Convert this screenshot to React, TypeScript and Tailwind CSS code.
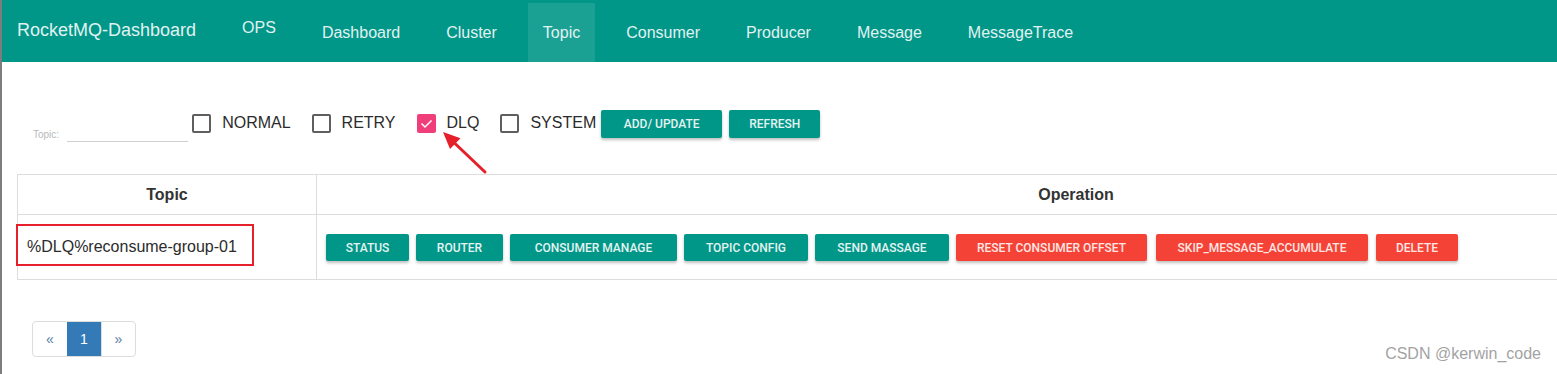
import React from "react";

const navItems = ["OPS", "Dashboard", "Cluster", "Topic", "Consumer", "Producer", "Message", "MessageTrace"];

function Check({ label, checked }: { label: string; checked?: boolean }) {
  return (
    <div className="flex items-center mt-[4px] mr-[21px]">
      {checked ? (
        <div className="w-[19px] h-[19px] rounded-[2px] bg-[#ef3e79] flex items-center justify-center">
          <svg width="19" height="19" viewBox="0 0 19 19">
            <polyline points="4.5,9.5 8,13 14.5,6.5" fill="none" stroke="#fff" strokeWidth="1.5" />
          </svg>
        </div>
      ) : (
        <div className="w-[19px] h-[19px] rounded-[2px] border-2 border-[#5f5f5f]" />
      )}
      <span className="ml-[11px] text-[16px] leading-[19px] text-[#2b2b2b] -mt-[2px]">{label}</span>
    </div>
  );
}

function Btn({ children, red, w }: { children: React.ReactNode; red?: boolean; w: string }) {
  return (
    <div
      className={
        (red
          ? "h-[27px] rounded-[2px] bg-[#f44336] text-[#ffe6e4] "
          : "h-[27px] rounded-[2px] bg-[#009688] text-[#e3f3f1] ") +
        "text-[12px] font-medium font-['Roboto',Arial,sans-serif] shadow-[0_2px_3px_rgba(0,0,0,0.25)] flex items-center justify-center whitespace-nowrap shrink-0 " +
        w
      }
    >
      {children}
    </div>
  );
}

export default function App() {
  return (
    <div className="relative w-[1557px] h-[374px] overflow-hidden bg-white flex font-['Liberation_Sans',Arial,sans-serif]">
      <div className="w-[2px] shrink-0 bg-[#7d7d7d]" />
      <div className="flex-1 min-w-0 flex flex-col overflow-hidden">
        {/* Nav */}
        <div className="h-[62px] shrink-0 bg-[#009688] flex items-stretch text-[#e0f2f1]">
          <div className="ml-[15px] mr-[31px] flex items-center text-[18px] pb-[2px] whitespace-nowrap">RocketMQ-Dashboard</div>
          <div className="flex gap-[16px] pt-[3px]">
            {navItems.map((n) => (
              <div
                key={n}
                className={
                  n === "Topic"
                    ? "px-[15px] flex items-center text-[16px] bg-[#1aa194] whitespace-nowrap"
                    : n === "OPS"
                    ? "px-[15px] flex items-center text-[16px] pb-[9px] whitespace-nowrap"
                    : "px-[15px] flex items-center text-[16px] whitespace-nowrap"
                }
              >
                {n}
              </div>
            ))}
          </div>
        </div>

        {/* Filter row */}
        <div className="mt-[48px] pl-[31px] flex items-start h-[32px]">
          <div className="mt-[14px] h-[18px] flex items-center mr-[4px]">
            <span className="text-[10px] text-[#b9b9b9] mb-[2px] mt-[4px]">Topic:</span>
            <div className="ml-[8px] w-[121px] h-[18px] border-b border-[#cfcfcf]" />
          </div>
          <Check label="NORMAL" />
          <Check label="RETRY" />
          <Check label="DLQ" checked />
          <div className="-mr-[16px]">
            <Check label="SYSTEM" />
          </div>
          <div className="flex gap-[7px]">
            <div className="h-[28px] w-[121px] rounded-[2px] bg-[#009688] text-[12px] font-medium font-['Roboto',Arial,sans-serif] text-[#e3f3f1] shadow-[0_2px_3px_rgba(0,0,0,0.25)] flex items-center justify-center">ADD/ UPDATE</div>
            <div className="h-[28px] w-[91px] rounded-[2px] bg-[#009688] text-[12px] font-medium font-['Roboto',Arial,sans-serif] text-[#e3f3f1] shadow-[0_2px_3px_rgba(0,0,0,0.25)] flex items-center justify-center">REFRESH</div>
          </div>
        </div>

        {/* Table */}
        <div className="mt-[32px] ml-[15px] w-[1818px] shrink-0 border-l border-t border-[#dddddd] text-[#333]">
          <div className="flex h-[40px] border-b border-[#dddddd] font-bold text-[16px]">
            <div className="w-[299px] border-r border-[#dddddd] flex items-center justify-center">Topic</div>
            <div className="flex-1 flex items-center justify-center">Operation</div>
          </div>
          <div className="flex h-[65px] border-b border-[#dddddd]">
            <div className="relative w-[299px] border-r border-[#dddddd] flex items-center pl-[9px] text-[16px] text-[#2b2b2b]">
              %DLQ%reconsume-group-01
              <div className="absolute left-[-2px] top-[9px] w-[238px] h-[42px] border-2 border-[#e5202a]" />
            </div>
            <div className="flex-1 flex items-center pl-[9px] gap-[7px] pt-[1px]">
              <Btn w="w-[83px]">STATUS</Btn>
              <Btn w="w-[87px]">ROUTER</Btn>
              <Btn w="w-[167px]">CONSUMER MANAGE</Btn>
              <Btn w="w-[124px]">TOPIC CONFIG</Btn>
              <Btn w="w-[134px]">SEND MASSAGE</Btn>
              <Btn red w="w-[191px]">RESET CONSUMER OFFSET</Btn>
              <Btn red w="w-[212px] ml-[2px]">SKIP_MESSAGE_ACCUMULATE</Btn>
              <Btn red w="w-[82px] ml-[1px]">DELETE</Btn>
            </div>
          </div>
        </div>

        {/* Pagination */}
        <div className="mt-[41px] ml-[30px] flex">
          <div className="flex h-[36px] border border-[#dddddd] rounded-[4px] overflow-hidden text-[14px]">
            <div className="w-[34px] flex items-center justify-center text-[#5b7ea3]">«</div>
            <div className="w-[34px] flex items-center justify-center bg-[#337ab7] text-white">1</div>
            <div className="w-[34px] flex items-center justify-center text-[#5b7ea3] border-l border-[#dddddd]">»</div>
          </div>
        </div>
      </div>

      {/* Annotation arrow */}
      <svg className="absolute left-0 top-0 pointer-events-none" width="1557" height="374">
        <line x1="485" y1="172" x2="455" y2="143.5" stroke="#e5202a" strokeWidth="3" strokeLinecap="round" />
        <polygon points="443,132 460.5,138.2 450,149" fill="#e5202a" />
      </svg>

      {/* Watermark */}
      <div className="absolute right-[16px] bottom-[8px] text-[16px] text-[#a3a3a3]">CSDN @kerwin_code</div>
    </div>
  );
}
